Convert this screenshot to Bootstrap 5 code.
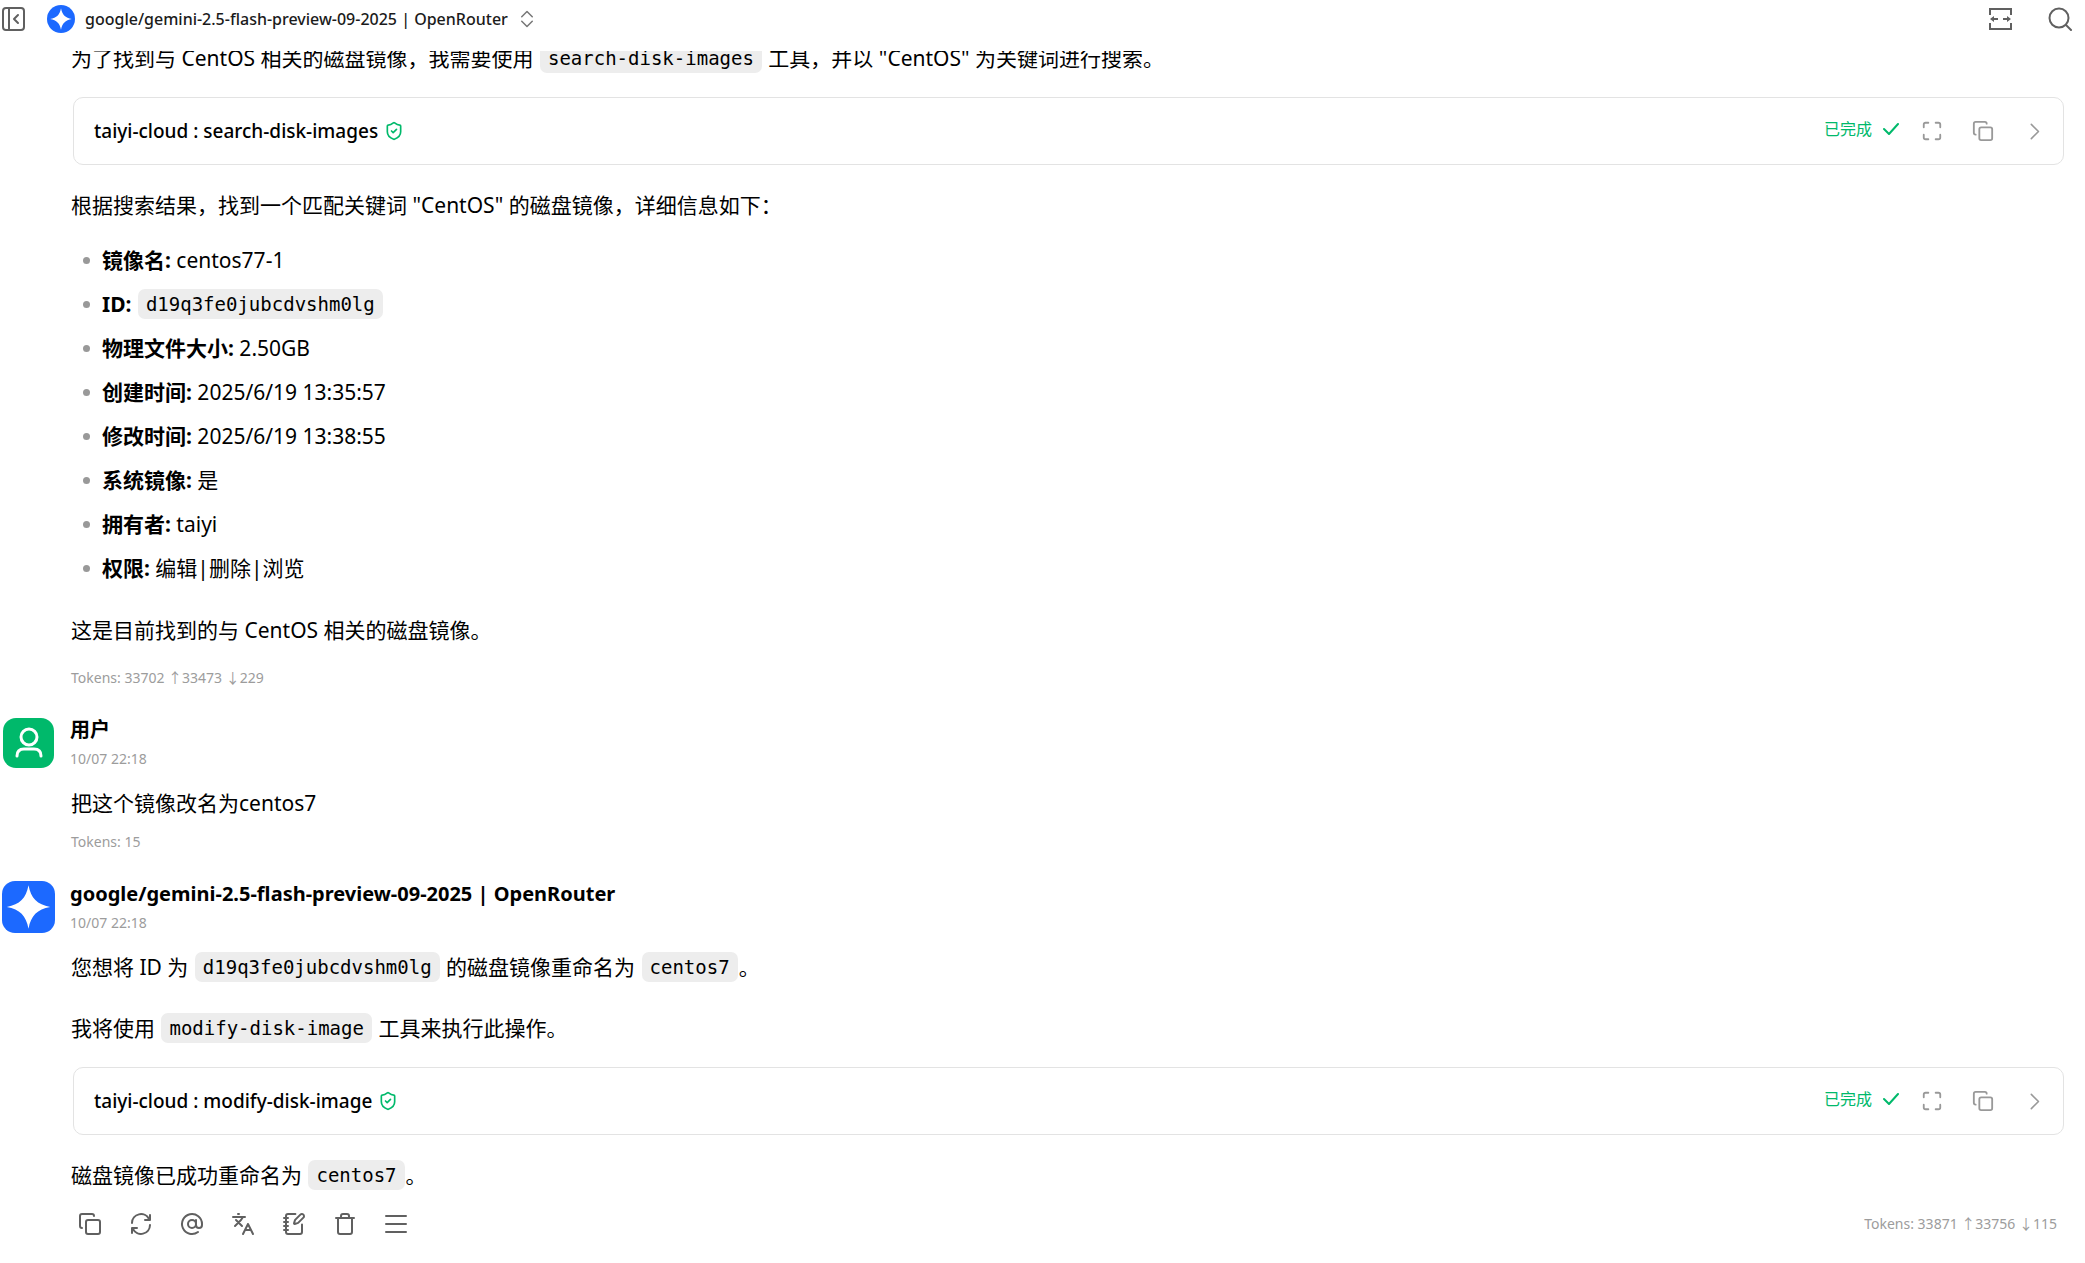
<!DOCTYPE html>
<html lang="zh-CN">
<head>
<meta charset="utf-8">
<meta name="viewport" content="width=device-width, initial-scale=1">
<title>google/gemini-2.5-flash-preview-09-2025 | OpenRouter</title>
<link href="https://cdn.jsdelivr.net/npm/bootstrap@5.3.0/dist/css/bootstrap.min.css" rel="stylesheet">
<style>
  :root { --ok: #00b96b; --gem: #1c69ff; --icon: #606060; --muted: #9c9c9c; }
  body { font-family: "Noto Sans", "Noto Sans CJK SC", sans-serif; font-size: 21px; line-height: 34px; color: #000; background: #fff; }
  svg { fill: none; stroke: currentColor; stroke-width: 2; stroke-linecap: round; stroke-linejoin: round; display: block; flex: none; }
  svg.flat { stroke: none; }
  svg.sharp { stroke-linecap: butt; stroke-linejoin: miter; }
  svg.bold-line { stroke-width: 3; }
  .icon-btn { border: 0; background: none; padding: 0; color: var(--icon); display: flex; align-items: center; justify-content: center; }
  .topbar { height: 51px; padding: 0 12px 14px 1px; z-index: 2; }
  .topbar-end { gap: 36px; }
  .model-btn { font-size: 16px; font-weight: 500; line-height: 28px; color: #1b1b1b; gap: 10px; margin-left: 22px; }
  .model-btn .updown { color: #777; }
  .chat { margin-top: -10px; padding-right: 21px; }
  .msg { margin-bottom: 28px; }
  .msg-head { height: 53px; margin-bottom: 17px; padding-left: 2px; gap: 15px; }
  .avatar-box { width: 53px; height: 52px; border-radius: 13px; color: #fff; background: var(--gem); }
  .avatar-box.is-user { background: var(--ok); height: 50px; width: 51px; margin: 0 1px; }
  .who { font-size: 20px; font-weight: 700; line-height: 28px; margin: 0; }
  .when { font-size: 14px; line-height: 20px; color: var(--muted); display: block; margin-top: 5px; }
  .msg-body { padding-left: 71px; }
  .msg-body p { margin: 0 0 27px; }
  .msg-body p.before-card { margin-bottom: 22px; }
  .msg-body p.tight { margin-bottom: 21px; }
  .msg-body p.closing { margin-bottom: 12px; }
  .msg-body code { font-family: "DejaVu Sans Mono", monospace; font-size: 19px; line-height: 30px; color: #000; background: #ededed; border-radius: 7px; padding: 0 8px; margin: 0 1px 2px; display: inline-block; vertical-align: bottom; }
  .facts { list-style: none; padding: 0 0 0 31px; margin: 0 0 28px; }
  .facts li { position: relative; margin-bottom: 10px; }
  .facts li:last-child { margin-bottom: 0; }
  .facts li::before { content: ""; position: absolute; left: -19px; top: 14px; width: 7px; height: 7px; border-radius: 50%; background: #999; }
  .tool-card { border: 1px solid #e3e3e3; border-radius: 10px; height: 68px; margin: 0 0 23px 2px; padding: 0 9px 0 20px; }
  .tool-name { font-size: 19px; font-weight: 500; gap: 6px; }
  .tool-name svg { color: var(--ok); }
  .tool-state { font-size: 16px; color: var(--ok); line-height: 20px; gap: 11px; margin-right: 13px; padding-bottom: 4px; }
  .tool-actions { gap: 11px; }
  .tool-actions .icon-btn, .msg-tools .icon-btn { width: 40px; height: 40px; }
  .tool-actions .icon-btn { color: #999; }
  .tokens { font-size: 14px; line-height: 20px; color: var(--muted); }
  .msg-tools { gap: 11px; margin-left: -1px; }
  .msg-foot { padding-right: 7px; }
</style>
</head>
<body>
<svg class="d-none" aria-hidden="true">
  <symbol id="i-copy" viewBox="0 0 24 24"><rect x="8" y="8" width="14" height="14" rx="2"/><path d="M4 16c-1.100 0-2-.9-2-2V4c0-1.100.9-2 2-2h10c1.100 0 2 .9 2 2"/></symbol>
  <symbol id="i-full" viewBox="0 0 24 24"><path d="M8 3H5a2 2 0 0 0-2 2v3M21 8V5a2 2 0 0 0-2-2h-3M3 16v3a2 2 0 0 0 2 2h3M16 21h3a2 2 0 0 0 2-2v-3"/></symbol>
  <symbol id="i-right" viewBox="0 0 24 24"><path d="m8 3 9 9-9 9"/></symbol>
  <symbol id="i-check" viewBox="0 0 16 12"><path d="m1 6 5 5 9-10"/></symbol>
  <symbol id="i-shield" viewBox="0 0 24 24"><path d="M20 13c0 5-3.500 7.500-7.660 8.950a1 1 0 0 1-.67-.01C7.500 20.500 4 18 4 13V6a1 1 0 0 1 1-1c2 0 4.500-1.200 6.240-2.720a1.170 1.170 0 0 1 1.520 0C14.510 3.810 17 5 19 5a1 1 0 0 1 1 1z"/><path d="m9 12 2 2 4-4"/></symbol>
  <symbol id="i-spark" viewBox="0 0 24 24"><path d="M12 2c1.100 6 4 8.900 10 10-6 1.100-8.900 4-10 10-1.100-6-4-8.900-10-10 6-1.100 8.900-4 10-10z" fill="#fff"/></symbol>
</svg>

<header class="topbar d-flex align-items-center justify-content-between position-relative bg-white">
  <div class="d-flex align-items-center">
    <button class="icon-btn" type="button" aria-label="折叠侧栏"><svg width="24" height="24" viewBox="0 0 24 24"><rect x="2" y="1" width="21" height="22" rx="3"/><path d="M8 1v22M17 8l-4 4 4 4"/></svg></button>
    <button class="icon-btn model-btn" type="button">
      <svg class="flat" width="28" height="28" viewBox="0 0 28 28"><circle cx="14" cy="14" r="14" fill="#1c69ff"/><use href="#i-spark" x="1" y="1" width="26" height="26"/></svg>
      <span>google/gemini-2.5-flash-preview-09-2025 | OpenRouter</span>
      <svg class="updown" width="18" height="18" viewBox="0 0 24 24"><path d="m5 9 7-7 7 7M5 15l7 7 7-7"/></svg>
    </button>
  </div>
  <div class="topbar-end d-flex">
    <button class="icon-btn" type="button" aria-label="切换宽度"><svg class="sharp" width="24" height="24" viewBox="0 0 24 24"><path d="M2 8V2h21v6M2 16v6h21v-6"/><path d="M4 12h6M15 12h6"/><path d="M2 12l4-3v6zM23 12l-4-3v6z" fill="currentColor" stroke="none"/></svg></button>
    <button class="icon-btn" type="button" aria-label="搜索"><svg width="25" height="24" viewBox="0 0 25 24"><circle cx="11" cy="11" r="9.500"/><path d="m18 18 5 5"/></svg></button>
  </div>
</header>

<main class="chat">
  <article class="msg">
    <div class="msg-body">
      <p class="before-card">为了找到与 CentOS 相关的磁盘镜像，我需要使用 <code>search-disk-images</code> 工具，并以 "CentOS" 为关键词进行搜索。</p>
      <section class="tool-card d-flex align-items-center justify-content-between">
        <div class="tool-name d-flex align-items-center"><span>taiyi-cloud : search-disk-images</span><svg width="20" height="20"><use href="#i-shield"/></svg></div>
        <div class="d-flex align-items-center">
          <div class="tool-state d-flex align-items-center"><span>已完成</span><svg width="16" height="12"><use href="#i-check"/></svg></div>
          <div class="tool-actions d-flex">
            <button class="icon-btn" type="button" aria-label="展开"><svg width="22" height="22"><use href="#i-full"/></svg></button>
            <button class="icon-btn" type="button" aria-label="复制"><svg width="22" height="22"><use href="#i-copy"/></svg></button>
            <button class="icon-btn" type="button" aria-label="详情"><svg width="19" height="19"><use href="#i-right"/></svg></button>
          </div>
        </div>
      </section>
      <p class="tight">根据搜索结果，找到一个匹配关键词 "CentOS" 的磁盘镜像，详细信息如下：</p>
      <ul class="facts">
        <li><strong>镜像名:</strong> centos77-1</li>
        <li><strong>ID:</strong> <code>d19q3fe0jubcdvshm0lg</code></li>
        <li><strong>物理文件大小:</strong> 2.50GB</li>
        <li><strong>创建时间:</strong> 2025/6/19 13:35:57</li>
        <li><strong>修改时间:</strong> 2025/6/19 13:38:55</li>
        <li><strong>系统镜像:</strong> 是</li>
        <li><strong>拥有者:</strong> taiyi</li>
        <li><strong>权限:</strong> 编辑|删除|浏览</li>
      </ul>
      <p class="tight">这是目前找到的与 CentOS 相关的磁盘镜像。</p>
      <div class="tokens">Tokens: 33702 ↑33473 ↓229</div>
    </div>
  </article>

  <article class="msg">
    <header class="msg-head d-flex align-items-center">
      <div class="avatar-box is-user d-flex align-items-center justify-content-center"><svg class="bold-line" width="28" height="32" viewBox="0 0 28 32"><circle cx="14" cy="10" r="8"/><path d="M2 29c0-5 3-7 7-7h10c4 0 7 2 7 7"/></svg></div>
      <div><h2 class="who">用户</h2><time class="when">10/07 22:18</time></div>
    </header>
    <div class="msg-body">
      <p class="closing">把这个镜像改名为centos7</p>
      <div class="tokens">Tokens: 15</div>
    </div>
  </article>

  <article>
    <header class="msg-head d-flex align-items-center">
      <div class="avatar-box d-flex align-items-center justify-content-center"><svg class="flat" width="53" height="52"><use href="#i-spark"/></svg></div>
      <div><h2 class="who">google/gemini-2.5-flash-preview-09-2025 | OpenRouter</h2><time class="when">10/07 22:18</time></div>
    </header>
    <div class="msg-body">
      <p>您想将 ID 为 <code>d19q3fe0jubcdvshm0lg</code> 的磁盘镜像重命名为 <code>centos7</code>。</p>
      <p class="before-card">我将使用 <code>modify-disk-image</code> 工具来执行此操作。</p>
      <section class="tool-card d-flex align-items-center justify-content-between">
        <div class="tool-name d-flex align-items-center"><span>taiyi-cloud : modify-disk-image</span><svg width="20" height="20"><use href="#i-shield"/></svg></div>
        <div class="d-flex align-items-center">
          <div class="tool-state d-flex align-items-center"><span>已完成</span><svg width="16" height="12"><use href="#i-check"/></svg></div>
          <div class="tool-actions d-flex">
            <button class="icon-btn" type="button" aria-label="展开"><svg width="22" height="22"><use href="#i-full"/></svg></button>
            <button class="icon-btn" type="button" aria-label="复制"><svg width="22" height="22"><use href="#i-copy"/></svg></button>
            <button class="icon-btn" type="button" aria-label="详情"><svg width="19" height="19"><use href="#i-right"/></svg></button>
          </div>
        </div>
      </section>
      <p class="closing">磁盘镜像已成功重命名为 <code>centos7</code>。</p>
      <footer class="msg-foot d-flex align-items-center justify-content-between">
        <div class="msg-tools d-flex">
          <button class="icon-btn" type="button" aria-label="复制"><svg width="24" height="24"><use href="#i-copy"/></svg></button>
          <button class="icon-btn" type="button" aria-label="重新生成"><svg width="24" height="24" viewBox="0 0 24 24"><path d="M3 11a9 9 0 0 1 17-4M21 13a9 9 0 0 1-17 4M21 3v5h-5M3 21v-5h5"/></svg></button>
          <button class="icon-btn" type="button" aria-label="提及模型"><svg width="24" height="24" viewBox="0 0 24 24"><circle cx="12" cy="12" r="4"/><path d="M16 8v5a3 3 0 0 0 6 0v-1a10 10 0 1 0-4 8"/></svg></button>
          <button class="icon-btn" type="button" aria-label="翻译"><svg width="24" height="24" viewBox="0 0 24 24"><path d="m5 8 6 6M4 14l6-6 2-3M2 5h12M7 2h1M22 22l-5-10-5 10M14 18h6"/></svg></button>
          <button class="icon-btn" type="button" aria-label="保存到笔记"><svg width="24" height="24" viewBox="0 0 24 24"><path d="M13.400 2H6a2 2 0 0 0-2 2v16a2 2 0 0 0 2 2h12a2 2 0 0 0 2-2v-7.400M2 6h4M2 10h4M2 14h4M2 18h4"/><path d="M21.380 5.630a1 1 0 1 0-3-3l-5.010 5.010a2 2 0 0 0-.51.86l-.83 2.870a.5.5 0 0 0 .62.62l2.870-.84a2 2 0 0 0 .85-.5z"/></svg></button>
          <button class="icon-btn" type="button" aria-label="删除"><svg width="22" height="24" viewBox="0 0 22 24"><path d="M2 6h18M4 6v14c0 1 1 2 2 2h10c1 0 2-1 2-2V6M7 6V4c0-1 1-2 2-2h4c1 0 2 1 2 2v2"/></svg></button>
          <button class="icon-btn" type="button" aria-label="更多"><svg width="24" height="24" viewBox="0 0 24 24"><path d="M2 4h20M2 12h20M2 20h20"/></svg></button>
        </div>
        <div class="tokens">Tokens: 33871 ↑33756 ↓115</div>
      </footer>
    </div>
  </article>
</main>
<script src="https://cdn.jsdelivr.net/npm/bootstrap@5.3.0/dist/js/bootstrap.bundle.min.js"></script>
</body>
</html>
